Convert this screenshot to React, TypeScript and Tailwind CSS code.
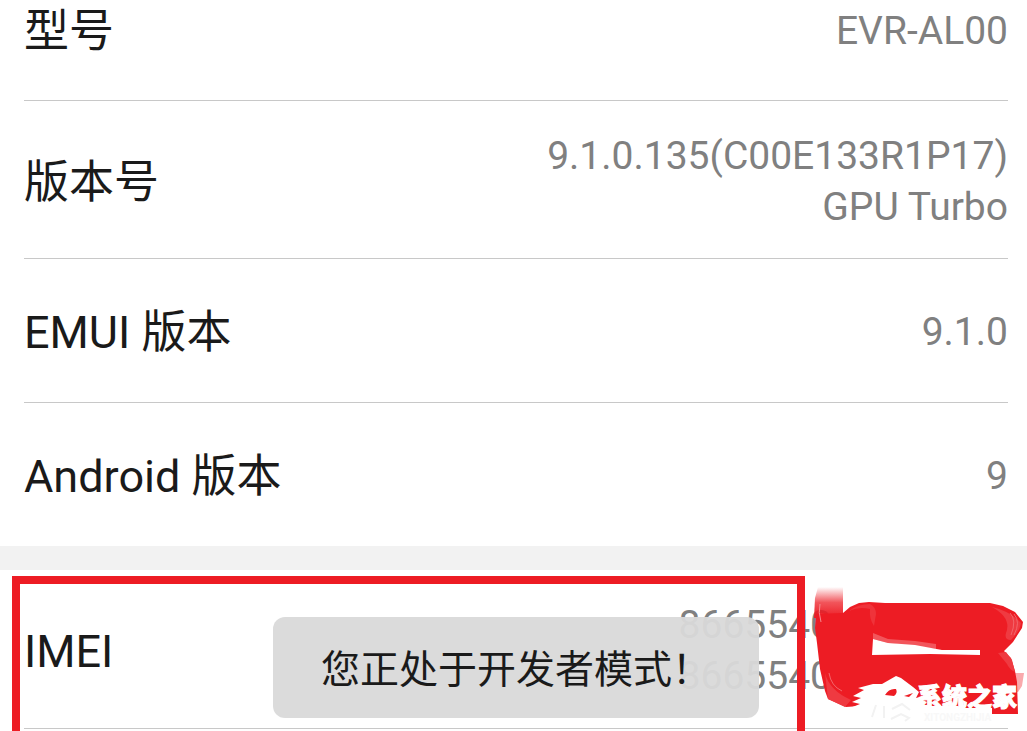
interface InfoRowProps {
  label: string;
  values: string[];
  className: string;
}

const InfoRow: React.FC<InfoRowProps> = ({ label, values, className }) => {
  return (
    <div className={`mr-[19px] ml-6 flex items-center justify-between ${className}`}>
      <dt className="text-[45px] leading-[51px] text-[#1a1a1a]">{label}</dt>
      <dd className="text-right text-[39px] leading-[51px] text-[#808080]">
        {values.map((value, i) => (
          <div key={i}>{value}</div>
        ))}
      </dd>
    </div>
  );
};

// Brush marks covering the rest of the IMEI numbers, with the site logo on top
const Scribble = () => {
  return (
    <svg
      className="absolute right-0 bottom-0"
      width="227"
      height="161"
      viewBox="0 0 227 161"
      role="img"
      aria-label="系统之家"
    >
      <defs>
        <linearGradient id="brushTop" x1="0" y1="0" x2="0" y2="1">
          <stop offset="0" stopColor="#ed1c24" stopOpacity="0" />
          <stop offset="0.5" stopColor="#ed1c24" stopOpacity="0.75" />
          <stop offset="1" stopColor="#ed1c24" />
        </linearGradient>
      </defs>

      <path d="M18 17H43V48H14L15 28Z" fill="url(#brushTop)" />
      <path d="M213 103H224L222 116L218 122H213Z" fill="#f9a9ac" />
      <path
        d="M16 44L43 43L50 37L59 33L69 32L85 33H190L203 36L215 42L223 52L222 58L213 72L204 81L211 88L215 101L217 112L218 144H192V138H165L158 136H60L46 137L28 129L25 121L20 99L17 73L15 58Z"
        fill="#ed1c24"
      />

      {/* dry brush edges */}
      <path d="M49 41Q58 34 70 34Q76 37 76 44L74 56Q69 49 70 39Q59 36 49 41Z" fill="#ef333a" />
      <path d="M73 63L88 69L115 71L136 74V79L115 76L88 73L73 69Z" fill="#f2555b" />
      <path d="M192 37Q210 41 221 53Q220 61 211 70Q204 70 206 63Q212 48 192 37Z" fill="#ef3a41" />
      <path d="M198 83L206 82L212 90L215 102Q209 99 207 94Z" fill="#ef3a41" />
      <path d="M25 103Q29 120 51 130L45 137L28 129Z" fill="#ef3a41" />
      <path d="M20 34Q18 42 21 52" fill="none" stroke="#f68a8e" />
      <path d="M210 43Q217 50 211 65M214 44Q221 52 214 65M29 103Q31 116 42 121" fill="none" stroke="#f2666b" />

      <path d="M73 69L88 73L115 75L142 80H180V85L130 84L72 85Z" fill="#fff" />

      {/* logo */}
      <path
        d="M52 132L61 128L53 126L64 120L58 118L73 114H82L96 106L101 108L113 117L119 122L116 128L123 126V140H45L60 134Z"
        fill="#fff"
      />
      <path d="M85 125Q89 118 96 119Q98 123 94 126ZM104 126L113 123L109 127Z" fill="#ed1c24" />
      <path d="M76 135L72 147M84 136V148M92 139L102 134L110 140M91 149L101 144L109 148L105 151" fill="none" stroke="#f2f2f2" strokeWidth="2" />
      <text
        x="117"
        y="136"
        fontSize="25"
        fontWeight="900"
        fill="#fff"
        stroke="#fff"
      >
        系统之家
      </text>
      <text x="124" y="151" fontSize="10" fontWeight="700" fill="#f8f8f8">
        XITONGZHIJIA
      </text>
    </svg>
  );
};

const App: React.FC = () => {
  return (
    <main className="overflow-hidden bg-white font-[Roboto,'Noto_Sans_CJK_SC',sans-serif]">
      <dl>
        <InfoRow label="型号" values={["EVR-AL00"]} className="border-b border-[#c8c8c8] pt-[6px] pb-[43px]" />
        <InfoRow
          label="版本号"
          values={["9.1.0.135(C00E133R1P17)", "GPU Turbo"]}
          className="border-b border-[#c8c8c8] pt-[30px] pb-[25px]"
        />
        <InfoRow label="EMUI 版本" values={["9.1.0"]} className="min-h-36 border-b border-[#c8c8c8] pt-[3px]" />
        <InfoRow label="Android 版本" values={["9"]} className="min-h-[143px] pt-[3px]" />
      </dl>

      <div className="h-6 bg-[#f2f2f2]" />

      <section className="relative overflow-hidden pb-[2px]">
        <dl>
          <InfoRow
            label="IMEI"
            values={["8665540", "8665540"]}
            className="border-b border-[#c8c8c8] pt-[30px] pr-44 pb-[26px]"
          />
        </dl>

        <Scribble />

        {/* Highlight frame */}
        <div className="absolute top-[6px] right-[222px] bottom-0 left-3 border-8 border-b-0 border-[#ed1c24]" />

        {/* Toast */}
        <div className="absolute top-[47px] right-[19px] left-6 flex justify-center">
          <p
            role="status"
            className="rounded-xl bg-[#d9d9d9]/95 px-12 pt-[28px] pb-[22px] text-[39px] leading-[51px] whitespace-nowrap text-[#1a1a1a]"
          >
            您正处于开发者模式！
          </p>
        </div>
      </section>
    </main>
  );
};

export default App;
